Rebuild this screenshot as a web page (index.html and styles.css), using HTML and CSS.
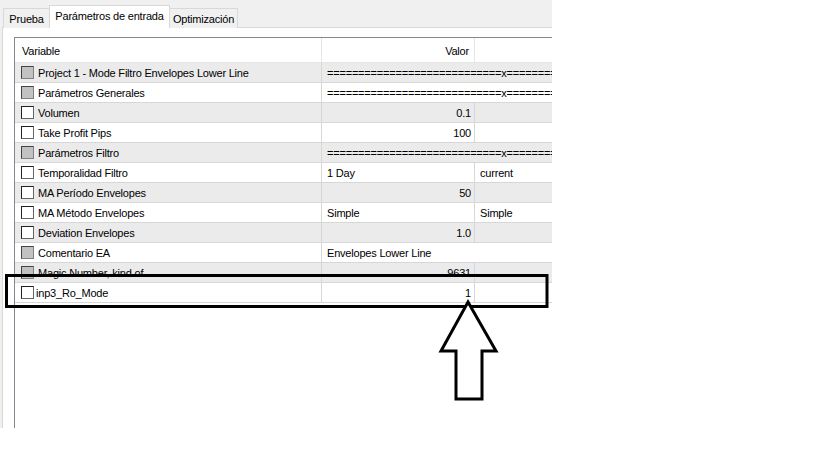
FILE: index.html
```html
<!DOCTYPE html>
<html lang="es">
  <head>
    <meta charset="UTF-8" />
    <title>Parámetros de entrada</title>
    <link rel="stylesheet" href="styles.css">
  </head>
  <body>
    <div class="window">
      <div class="tabs">
        <div class="tab first">Prueba</div>
        <div class="tab active">Parámetros de entrada</div>
        <div class="tab last">Optimización</div>
      </div>

      <div class="tab-panel">
        <div class="list">
          <div class="list-head">
            <div class="cell">Variable</div>
            <div class="cell num">Valor</div>
            <div class="cell"></div>
          </div>

          <div class="row odd">
            <div class="cell name"><span class="check grey"></span>Project 1 - Mode Filtro Envelopes Lower Line</div>
            <div class="cell wide">============================x=========</div>
          </div>
          <div class="row">
            <div class="cell name"><span class="check grey"></span>Parámetros Generales</div>
            <div class="cell wide">============================x=========</div>
          </div>
          <div class="row odd">
            <div class="cell name"><span class="check"></span>Volumen</div>
            <div class="cell num">0.1</div>
            <div class="cell"></div>
          </div>
          <div class="row">
            <div class="cell name"><span class="check"></span>Take Profit Pips</div>
            <div class="cell num">100</div>
            <div class="cell"></div>
          </div>
          <div class="row odd">
            <div class="cell name"><span class="check grey"></span>Parámetros Filtro</div>
            <div class="cell wide">============================x=========</div>
          </div>
          <div class="row">
            <div class="cell name"><span class="check"></span>Temporalidad Filtro</div>
            <div class="cell">1 Day</div>
            <div class="cell">current</div>
          </div>
          <div class="row odd">
            <div class="cell name"><span class="check"></span>MA Período Envelopes</div>
            <div class="cell num">50</div>
            <div class="cell"></div>
          </div>
          <div class="row">
            <div class="cell name"><span class="check"></span>MA Método Envelopes</div>
            <div class="cell">Simple</div>
            <div class="cell">Simple</div>
          </div>
          <div class="row odd">
            <div class="cell name"><span class="check"></span>Deviation Envelopes</div>
            <div class="cell num">1.0</div>
            <div class="cell"></div>
          </div>
          <div class="row">
            <div class="cell name"><span class="check grey"></span>Comentario EA</div>
            <div class="cell wide">Envelopes Lower Line</div>
          </div>
          <div class="row odd">
            <div class="cell name"><span class="check grey"></span>Magic Number, kind of...</div>
            <div class="cell num">9631</div>
            <div class="cell"></div>
          </div>
          <div class="row">
            <div class="cell name tight"><span class="check"></span>inp3_Ro_Mode</div>
            <div class="cell num">1</div>
            <div class="cell"></div>
          </div>
        </div>
      </div>
    </div>

    <!-- marca dibujada encima de la captura -->
    <svg class="markup" width="816" height="460" viewBox="0 0 816 460">
      <rect x="6.5" y="275.5" width="540.5" height="31" fill="none" stroke="#000" stroke-width="3" />
      <polygon points="468,302 496,351 482,351 482,399 456,399 456,351 441,351" fill="#fff" stroke="#000" stroke-width="3" />
    </svg>
  </body>
</html>
```

FILE: styles.css
```css
* {
  margin: 0;
  padding: 0;
  box-sizing: border-box;
}

body {
  font-family: "Liberation Sans", Arial, sans-serif;
  font-size: 11px;
  letter-spacing: -0.2px;
  color: #000000;
  background: #ffffff;
  width: 816px;
  height: 460px;
  position: relative;
  overflow: hidden;
}

.window {
  width: 552px;
  height: 428px;
  background: #f0f0f0;
  display: flex;
  flex-direction: column;
  overflow: hidden;
}

/* pestañas */
.tabs {
  height: 28px;
  padding: 8px 0 0 3px;
  display: flex;
  align-items: flex-end;
  position: relative;
  z-index: 2;
}

.tab {
  height: 20px;
  display: flex;
  align-items: center;
  justify-content: center;
  border: 1px solid #d9d9d9;
  border-bottom: none;
  background: #f0f0f0;
}

.tab.first {
  width: 46px;
  border-right: none;
}

.tab.active {
  width: 121px;
  height: 23px;
  padding-bottom: 2px;
  background: #ffffff;
}

.tab.last {
  width: 68px;
  border-left: none;
}

.tab-panel {
  flex: 1;
  margin-top: -1px;
  margin-left: 2px;
  border-top: 1px solid #d9d9d9;
  border-left: 1px solid #d9d9d9;
  background: #ffffff;
  padding: 9px 0 0 11px;
  display: flex;
}

/* lista de parámetros */
.list {
  flex: 1;
  border-top: 1px solid #828790;
  border-left: 1px solid #828790;
  background: #ffffff;
  overflow: hidden;
}

.list-head,
.row {
  display: grid;
  grid-template-columns: 307px 153px 200px;
}

.list-head {
  height: 25px;
  border-bottom: 1px solid #e5e5e5;
}

.list-head .cell {
  height: 24px;
  border-right: 1px solid #e5e5e5;
  padding-left: 7px;
  padding-top: 1px;
}

.list-head .cell.num {
  padding-right: 5px;
}

.cell {
  display: flex;
  align-items: center;
  white-space: nowrap;
  overflow: hidden;
  padding-left: 5px;
}

.cell.num {
  justify-content: flex-end;
  padding-left: 0;
  padding-right: 3px;
}

.cell.wide {
  grid-column: span 2;
}

.row {
  height: 20px;
  border-bottom: 1px solid #d7d7d7;
}

.row.odd {
  background: #ebebeb;
}

.row .cell {
  border-right: 1px solid #d7d7d7;
}

.row .cell.name {
  padding-left: 6px;
  gap: 4px;
}

.row .cell.name.tight {
  gap: 2px;
}

.check {
  width: 13px;
  height: 13px;
  flex: none;
  background: #ffffff;
  border: 1px solid #666666;
  border-top-color: #222222;
  border-left-color: #222222;
}

.check.grey {
  background: #c2c2c2;
  border-color: #808080;
  border-top-color: #444444;
  border-left-color: #444444;
}

/* anotación */
.markup {
  position: absolute;
  top: 0;
  left: 0;
  pointer-events: none;
}
```
